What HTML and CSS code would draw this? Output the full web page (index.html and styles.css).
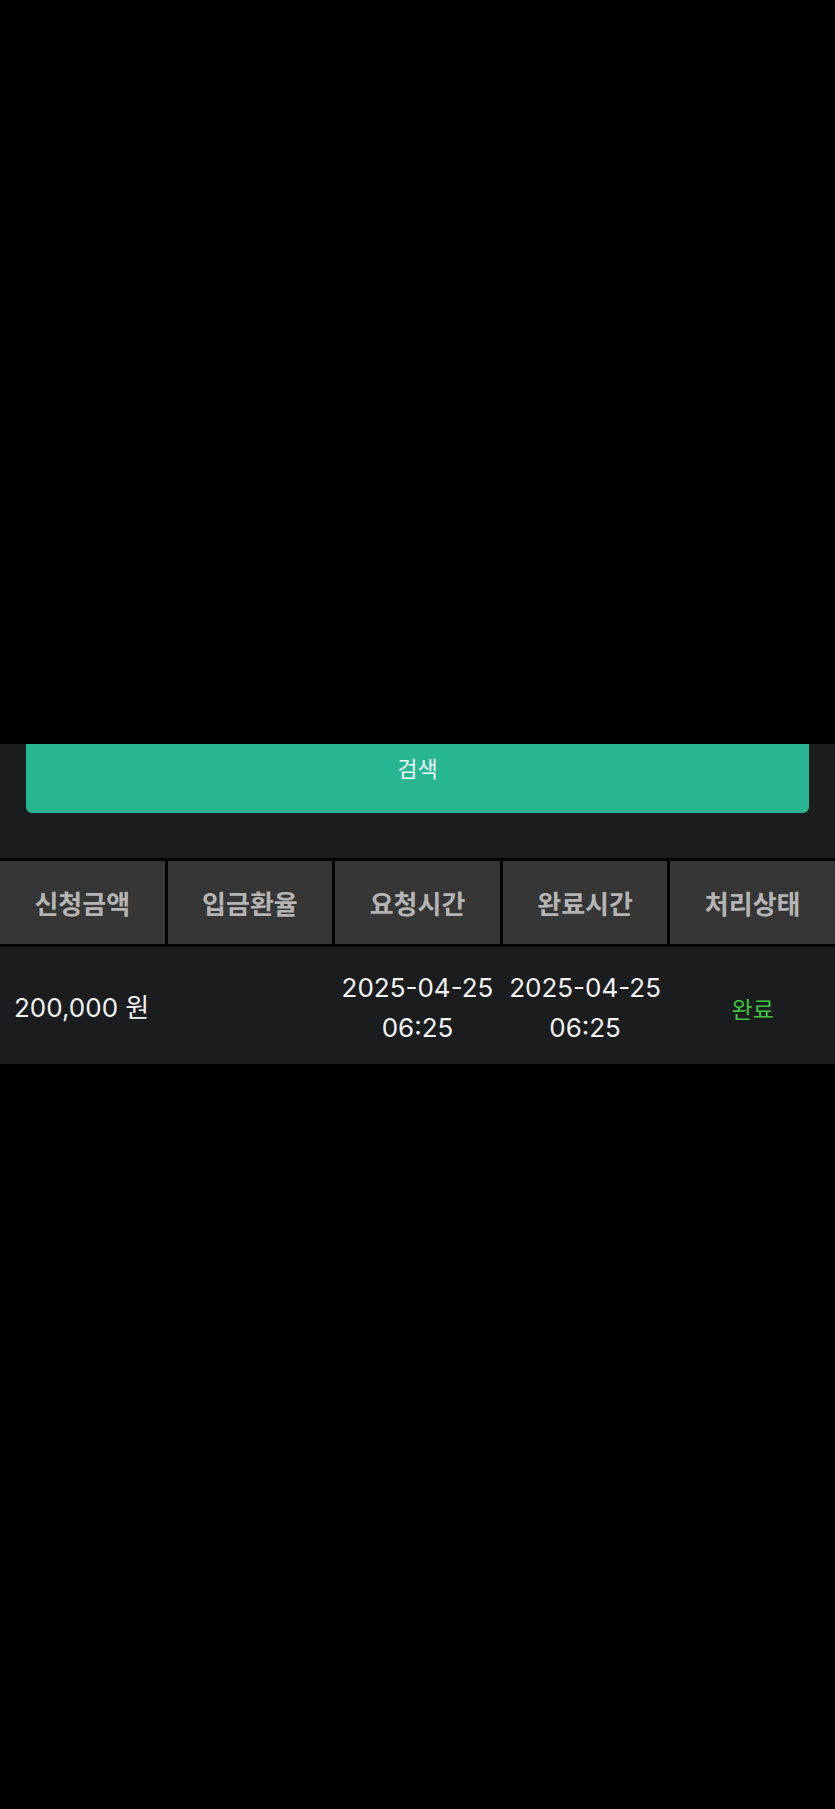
FILE: index.html
```html
<!DOCTYPE html>
<html lang="ko">
<head>
<meta charset="utf-8">
<title>신청내역</title>
<link rel="stylesheet" href="styles.css">
</head>
<body>
<div class="spacer"></div>
<div class="panel">
  <button class="search-btn" type="button">검색</button>
</div>
<div class="table">
  <div class="thead">
    <div class="th">신청금액</div>
    <div class="th">입금환율</div>
    <div class="th">요청시간</div>
    <div class="th">완료시간</div>
    <div class="th">처리상태</div>
  </div>
  <div class="trow">
    <div class="td td-amount">200,000 원</div>
    <div class="td"></div>
    <div class="td td-center">2025-04-25<br>06:25</div>
    <div class="td td-center">2025-04-25<br>06:25</div>
    <div class="td td-center td-status">완료</div>
  </div>
</div>
</body>
</html>
```
FILE: styles.css
```css
html, body {
  margin: 0;
  padding: 0;
  background: #000;
}
body {
  width: 835px;
  min-height: 1809px;
  font-family: Inter, "Noto Sans CJK KR", sans-serif;
  color: #f0f0f0;
}
.spacer {
  height: 744px;
}
.panel {
  background: #1b1c1e;
  padding: 0 26px 45px 26px;
}
.search-btn {
  display: block;
  width: 100%;
  height: 69px;
  margin: 0;
  border: 0;
  border-radius: 0 0 6px 6px;
  background: #28b592;
  color: #eef8f4;
  font-family: "Noto Sans CJK KR", sans-serif;
  font-size: 22px;
  line-height: 30px;
  padding: 8px 0 31px 0;
  text-align: center;
}
.table {
  background: #000;
  padding-top: 3px;
  display: flex;
  flex-direction: column;
  gap: 3px;
}
.thead, .trow {
  display: grid;
  grid-template-columns: repeat(5, 1fr);
  column-gap: 3px;
}
.th {
  height: 83px;
  background: #363636;
  color: #b4b4b4;
  font-family: "Noto Sans CJK KR", sans-serif;
  font-weight: 700;
  font-size: 26px;
  display: flex;
  align-items: center;
  justify-content: center;
}
.trow {
  background: #1b1c1e;
  height: 117px;
}
.td {
  display: flex;
  align-items: center;
  padding-top: 5px;
  font-size: 26px;
  line-height: 40px;
  color: #f2f2f2;
}
.td-amount {
  padding-left: 14px;
  white-space: nowrap;
}
.td-center {
  justify-content: center;
  text-align: center;
}
.td-status {
  color: #3ec43e;
  font-family: "Noto Sans CJK KR", sans-serif;
  font-size: 23px;
}
```
